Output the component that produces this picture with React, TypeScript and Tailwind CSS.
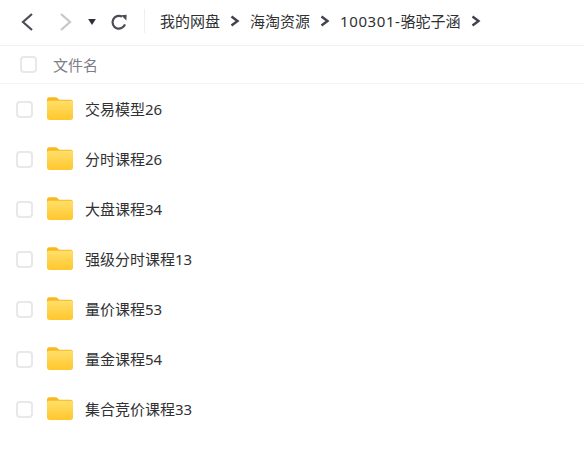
import React from "react";

const items = ["交易模型26", "分时课程26", "大盘课程34", "强级分时课程13", "量价课程53", "量金课程54", "集合竞价课程33"];

function Chevron() {
  return (
    <svg width="10" height="12" viewBox="0 0 10 12" className="shrink-0">
      <path d="M1.5 1.5l6 4.5-6 4.5" fill="none" stroke="#40414f" strokeWidth="2.4" />
    </svg>
  );
}

function Check() {
  return <div className="w-[17px] h-[17px] rounded-[4px] border-2 border-[#e8e8ea] bg-white shrink-0" />;
}

function Folder() {
  return (
    <svg width="26" height="23" viewBox="0 0 26 23" className="shrink-0">
      <defs>
        <linearGradient id="fg" x1="0" y1="0" x2="0" y2="1">
          <stop offset="0" stopColor="#ffdf6b" />
          <stop offset="1" stopColor="#ffc72c" />
        </linearGradient>
      </defs>
      <path d="M0 2.6C0 1.2 1 .2 2.4.2h6c1 0 1.6.4 2.2 1l1.6 1.6h11.4c1.4 0 2.4 1 2.4 2.4V8H0z" fill="#f9b91c" />
      <path d="M0 5.8c0-1.2.9-2 2-2h22c1.1 0 2 .8 2 2V20.6c0 1.4-1 2.4-2.4 2.4H2.4C1 23 0 22 0 20.6z" fill="url(#fg)" />
    </svg>
  );
}

export default function App() {
  return (
    <div className="w-[584px] h-[463px] bg-white overflow-hidden text-[15px] text-[#303133]" style={{ fontFamily: '"Noto Sans", "Noto Sans CJK SC", sans-serif' }}>
      <div className="h-[46px] border-b border-[#f1f1f3] flex items-center pl-[20px]">
        <svg width="14" height="20" viewBox="0 0 14 20" className="shrink-0 -mt-[2px]">
          <path d="M12 2L3 10l9 8" fill="none" stroke="#4b4c58" strokeWidth="2.2" />
        </svg>
        <svg width="14" height="20" viewBox="0 0 14 20" className="shrink-0 ml-[25px] -mt-[2px]">
          <path d="M2 2l9 8-9 8" fill="none" stroke="#c6c6ca" strokeWidth="2.2" />
        </svg>
        <svg width="8" height="6" viewBox="0 0 9 7" className="shrink-0 ml-[15px] mt-[-1px]">
          <path d="M0 0h9L4.5 7z" fill="#2e2f38" />
        </svg>
        <svg width="18" height="18" viewBox="0 0 18 18" className="shrink-0 ml-[14px] -mt-[2px]">
          <path d="M15 11.4A6.4 6.4 0 1 1 12 3.6" fill="none" stroke="#4b4c58" strokeWidth="2.2" />
          <path d="M11 2.2l5.6-.4-.2 5.6z" fill="#4b4c58" />
        </svg>
        <div className="w-px h-[24px] bg-[#efeff1] ml-[16px] mr-[15px] -mt-[3px]" />
        <div className="flex items-center -mt-[3px]">
          <span className="leading-[20px]">我的网盘</span>
          <span className="mx-[10px] flex"><Chevron /></span>
          <span className="leading-[20px]">海淘资源</span>
          <span className="mx-[10px] flex"><Chevron /></span>
          <span className="leading-[20px]"><span className="tracking-[0.6px]">100301-</span>骆驼子涵</span>
          <span className="mx-[10px] flex"><Chevron /></span>
        </div>
      </div>
      <div className="h-[38px] border-b border-[#f4f4f6] flex items-center pl-[20px]">
        <Check />
        <span className="ml-[16px] mt-[1px] text-[#7c7d85]">文件名</span>
      </div>
      <div>
        {items.map((t) => (
          <div key={t} className="h-[50px] flex items-center pl-[16px]">
            <Check />
            <div className="ml-[14px] flex -mt-[1px]"><Folder /></div>
            <span className="ml-[12px]">{t}</span>
          </div>
        ))}
      </div>
    </div>
  );
}
